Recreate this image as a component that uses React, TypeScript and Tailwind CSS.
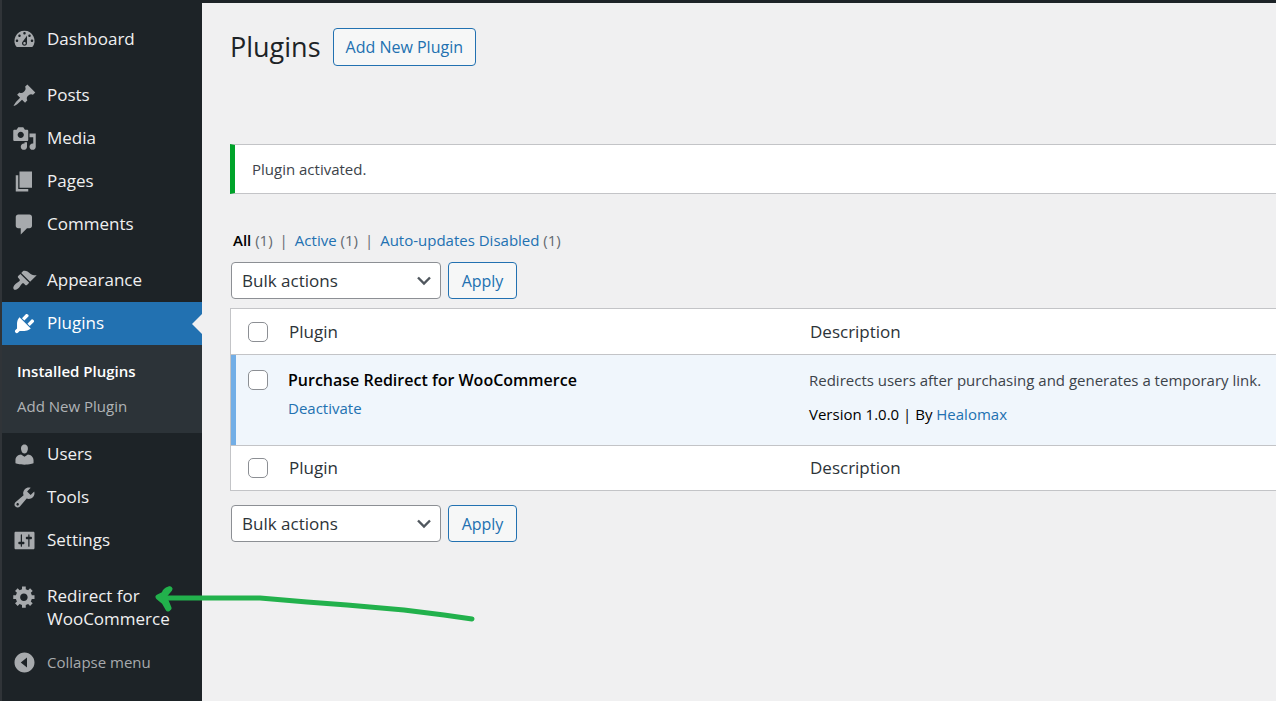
import { useState } from 'react';

type MenuItem = {
  label: string;
  icon: string;
};

const icons = {
  dashboard:
    'M3.76 16h12.48A7.998 7.998 0 0 0 10 3a7.998 7.998 0 0 0-6.24 13zM10 4c.55 0 1 .45 1 1s-.45 1-1 1-1-.45-1-1 .45-1 1-1zM6 6c.55 0 1 .45 1 1s-.45 1-1 1-1-.45-1-1 .45-1 1-1zm8 0c.55 0 1 .45 1 1s-.45 1-1 1-1-.45-1-1 .45-1 1-1zm-5.37 5.55L12 7v6c0 1.1-.9 2-2 2s-2-.9-2-2c0-.57.24-1.08.63-1.45zM4 10c.55 0 1 .45 1 1s-.45 1-1 1-1-.45-1-1 .45-1 1-1zm12 0c.55 0 1 .45 1 1s-.45 1-1 1-1-.45-1-1 .45-1 1-1zm-5 3c0-.55-.45-1-1-1s-1 .45-1 1 .45 1 1 1 1-.45 1-1z',
  posts:
    'M10.44 3.02l1.82-1.82 6.36 6.35-1.83 1.82c-1.05-.68-2.48-.57-3.41.36l-.75.75c-.92.93-1.04 2.35-.35 3.41l-1.83 1.82-2.41-2.41-2.8 2.79c-.42.42-3.38 2.71-3.8 2.29s1.86-3.39 2.28-3.81l2.79-2.79L4.1 9.36l1.83-1.82c1.05.69 2.48.57 3.4-.36l.75-.75c.93-.92 1.05-2.35.36-3.41z',
  media:
    'M13 11V4c0-.55-.45-1-1-1h-1.67L9 1H5L3.67 3H2c-.55 0-1 .45-1 1v7c0 .55.45 1 1 1h10c.55 0 1-.45 1-1zM7 4.5c1.38 0 2.5 1.12 2.5 2.5S8.38 9.5 7 9.5 4.5 8.38 4.5 7 5.62 4.5 7 4.5zM14 6h5v10.5c0 1.38-1.12 2.5-2.5 2.5S14 17.88 14 16.5s1.12-2.5 2.5-2.5c.17 0 .34.02.5.05V9h-3V6zm-4 8.05V13h2v3.5c0 1.38-1.12 2.5-2.5 2.5S7 17.88 7 16.5 8.12 14 9.5 14c.17 0 .34.02.5.05z',
  pages: 'M6 15V2h10v13H6zm-1 1h8v2H3V5h2v11z',
  comments:
    'M5 2h9c1.1 0 2 .9 2 2v7c0 1.1-.9 2-2 2h-2l-5 5v-5H5c-1.1 0-2-.9-2-2V4c0-1.1.9-2 2-2z',
  appearance:
    'M14.48 11.06L7.41 3.99l1.5-1.5c.5-.56 2.3-.47 3.51.32 1.21.8 1.43 1.28 2.91 2.1 1.18.64 2.45 1.26 4.45.85zm-.71.71L6.7 4.7 4.93 6.47c-.39.39-.39 1.02 0 1.41l1.06 1.06c.39.39.39 1.03 0 1.42-.6.6-1.43 1.11-2.21 1.69-.35.26-.7.53-1.01.84C1.43 14.23.4 16.08 1.4 17.07c.99 1 2.84-.03 4.18-1.36.31-.31.58-.66.85-1.02.57-.78 1.08-1.61 1.69-2.21.39-.39 1.02-.39 1.41 0l1.06 1.06c.39.39 1.02.39 1.41 0z',
  plugins:
    'M13.11 4.36L9.87 7.6 8 5.73l3.24-3.24c.35-.34 1.05-.2 1.56.32.52.51.66 1.21.31 1.55zm-8 1.77l.91-1.12 9.01 9.01-1.19.84c-.71.71-2.63 1.16-3.82 1.16H6.14L4.9 17.26c-.59.59-1.54.59-2.12 0-.59-.58-.59-1.53 0-2.12l1.24-1.24v-3.88c0-1.13.4-3.19 1.09-3.89zm7.26 3.97l3.24-3.24c.34-.35 1.04-.21 1.55.31.52.51.66 1.21.31 1.55l-3.24 3.25z',
  users:
    'M10 9.25c-2.27 0-2.73-3.44-2.73-3.44C7 4.02 7.82 2 9.97 2c2.16 0 2.98 2.02 2.71 3.81 0 0-.41 3.44-2.68 3.44zm0 2.57L12.72 10c2.39 0 4.52 2.33 4.52 4.53v2.49s-3.65 1.13-7.24 1.13c-3.65 0-7.24-1.13-7.24-1.13v-2.49c0-2.25 1.94-4.48 4.47-4.48z',
  tools:
    'M16.68 9.77c-1.34 1.34-3.3 1.67-4.95.99l-5.41 6.52c-.99.99-2.59.99-3.58 0s-.99-2.59 0-3.57l6.52-5.42c-.68-1.65-.35-3.61.99-4.95 1.28-1.28 3.12-1.62 4.72-1.06l-2.89 2.89 2.82 2.82 2.86-2.87c.53 1.58.18 3.39-1.08 4.65zM3.81 16.21c.4.39 1.04.39 1.43 0 .4-.4.4-1.04 0-1.43-.39-.4-1.03-.4-1.43 0-.39.39-.39 1.03 0 1.43z',
  settings:
    'M18 16V4c0-.55-.45-1-1-1H3c-.55 0-1 .45-1 1v12c0 .55.45 1 1 1h14c.55 0 1-.45 1-1zM8 11h1c.55 0 1 .45 1 1s-.45 1-1 1H8v1.5c0 .28-.22.5-.5.5s-.5-.22-.5-.5V13H6c-.55 0-1-.45-1-1s.45-1 1-1h1V5.5c0-.28.22-.5.5-.5s.5.22.5.5V11zm5-2h-1c-.55 0-1-.45-1-1s.45-1 1-1h1V5.5c0-.28.22-.5.5-.5s.5.22.5.5V7h1c.55 0 1 .45 1 1s-.45 1-1 1h-1v5.5c0 .28-.22.5-.5.5s-.5-.22-.5-.5V9z',
  generic:
    'M18 12h-2.18c-.17.7-.44 1.35-.81 1.93l1.54 1.54-2.1 2.1-1.54-1.54c-.58.36-1.23.63-1.91.79V19H8v-2.18c-.68-.16-1.33-.43-1.91-.79l-1.54 1.54-2.12-2.12 1.54-1.54c-.36-.58-.63-1.23-.79-1.91H1V9.03h2.17c.16-.7.44-1.35.8-1.94L2.43 5.55l2.1-2.1 1.54 1.54c.58-.37 1.24-.64 1.93-.81V2h3v2.18c.68.16 1.33.43 1.91.79l1.54-1.54 2.12 2.12-1.54 1.54c.36.59.64 1.24.8 1.94H18V12zm-8.5 1.5c1.66 0 3-1.34 3-3s-1.34-3-3-3-3 1.34-3 3 1.34 3 3 3z',
  collapse: 'M10 2c4.42 0 8 3.58 8 8s-3.58 8-8 8-8-3.58-8-8 3.58-8 8-8zm2 12V6l-5 4z',
};

const contentItems: MenuItem[] = [
  { label: 'Posts', icon: icons.posts },
  { label: 'Media', icon: icons.media },
  { label: 'Pages', icon: icons.pages },
  { label: 'Comments', icon: icons.comments },
];

const adminItems: MenuItem[] = [
  { label: 'Users', icon: icons.users },
  { label: 'Tools', icon: icons.tools },
  { label: 'Settings', icon: icons.settings },
];

const Icon = ({ path }: { path: string }) => (
  <svg viewBox="0 0 20 20" className="h-[25px] w-[25px] shrink-0" fill="currentColor" fillRule="evenodd" aria-hidden="true">
    <path d={path} />
  </svg>
);

const MenuLink = ({ item }: { item: MenuItem }) => (
  <a href="#" className="flex min-h-[43px] gap-[10px] py-[9px] pr-3 pl-[10px] text-[#a7aaad] hover:text-[#72aee6]">
    <Icon path={item.icon} />
    <span className="leading-[23px] text-[#f0f0f1]">{item.label}</span>
  </a>
);

const Sidebar = () => (
  <nav className="w-[202px] shrink-0 border-l-2 border-[#303438] bg-[#1d2327] pt-[18px] text-[17px]">
    <MenuLink item={{ label: 'Dashboard', icon: icons.dashboard }} />
    <div className="h-[13px]" />
    {contentItems.map((item) => (
      <MenuLink key={item.label} item={item} />
    ))}
    <div className="h-[13px]" />
    <MenuLink item={{ label: 'Appearance', icon: icons.appearance }} />

    <a href="#" aria-current="page" className="relative flex h-[43px] gap-[10px] bg-[#2271b1] py-[9px] pl-[10px] text-white">
      <Icon path={icons.plugins} />
      <span className="leading-[23px]">Plugins</span>
      {/* Notch pointing at the current page */}
      <span className="absolute top-1/2 right-0 -translate-y-1/2 border-y-10 border-r-10 border-y-transparent border-r-[#f0f0f1]" />
    </a>
    <div className="flex flex-col bg-[#2c3338] px-[15px] py-[9px] text-[15px] leading-[35px]">
      <a href="#" className="font-semibold text-white">Installed Plugins</a>
      <a href="#" className="text-[#b0b3b6] hover:text-[#72aee6]">Add New Plugin</a>
    </div>

    {adminItems.map((item) => (
      <MenuLink key={item.label} item={item} />
    ))}
    <div className="h-[13px]" />
    <MenuLink item={{ label: 'Redirect for WooCommerce', icon: icons.generic }} />
    <button type="button" className="flex h-[47px] w-full items-center gap-[10px] pl-[10px] text-[15px] text-[#a7aaad]">
      <Icon path={icons.collapse} />
      <span>Collapse menu</span>
    </button>
  </nav>
);

const BulkActions = ({ label }: { label: string }) => (
  <div className="flex gap-[7px] pl-px">
    <div className="relative">
      <select
        aria-label={label}
        className="h-[37px] w-[210px] appearance-none rounded-[4px] border border-[#8c8f94] bg-white pr-8 pl-[10px] text-[17px] text-[#2c3338]"
      >
        <option>Bulk actions</option>
        <option>Activate</option>
        <option>Deactivate</option>
        <option>Delete</option>
      </select>
      <svg viewBox="0 0 20 20" className="pointer-events-none absolute top-2 right-[7px] h-5 w-5" fill="none" stroke="#50575e" strokeWidth="2.4" aria-hidden="true">
        <path d="M4 7.5l6 6 6-6" />
      </svg>
    </div>
    <button type="button" className="h-[37px] w-[69px] rounded-[4px] border border-[#2271b1] bg-[#f6f7f7] text-[16px] text-[#2271b1]">
      Apply
    </button>
  </div>
);

const Checkbox = ({ label, checked, onChange }: { label: string; checked: boolean; onChange: () => void }) => (
  <input
    type="checkbox"
    aria-label={label}
    checked={checked}
    onChange={onChange}
    className="block h-5 w-5 appearance-none rounded-[5px] border border-[#8c8f94] bg-white checked:bg-[#2271b1]"
  />
);

export default function App() {
  const [selected, setSelected] = useState(false);
  const toggle = () => setSelected(!selected);

  const headings = (label: string, height: string) => (
    <tr className={`${height} text-[17px] text-[#2c3338]`}>
      <td className="w-[57px] pl-[17px]">
        <Checkbox label={label} checked={selected} onChange={toggle} />
      </td>
      <th scope="col" className="w-[521px] pl-px text-left font-normal">Plugin</th>
      <th scope="col" className="pl-px text-left font-normal">Description</th>
    </tr>
  );

  return (
    <div className="relative flex min-h-screen overflow-hidden bg-[#f0f0f1] font-['Open_Sans','Noto_Sans',sans-serif] text-[#3c434a]">
      <Sidebar />

      <main className="min-w-0 flex-1 border-t-[3px] border-[#1d2327] pl-7">
        <div className="flex items-center gap-3 pt-[25px]">
          <h1 className="text-[27px] leading-[36px] text-[#1d2327]">Plugins</h1>
          <a href="#" className="flex h-[38px] items-center rounded-[4px] border border-[#2271b1] bg-[#f6f7f7] px-3 text-[16px] text-[#2271b1]">
            Add New Plugin
          </a>
        </div>

        <div role="status" className="mt-[78px] flex h-[50px] items-center border-y border-l-[5px] border-y-[#c3c4c7] border-l-[#00a32a] bg-white pl-[17px] text-[15px]">
          Plugin activated.
        </div>

        <ul className="mt-[34px] mb-[10px] flex gap-[7px] pl-[3px] text-[15px] leading-6 text-[#646970]">
          <li><a href="#" className="font-semibold text-black">All</a> (1)</li>
          <li aria-hidden="true">|</li>
          <li><a href="#" className="text-[#2271b1]">Active</a> (1)</li>
          <li aria-hidden="true">|</li>
          <li><a href="#" className="text-[#2271b1]">Auto-updates Disabled</a> (1)</li>
        </ul>

        <BulkActions label="Select bulk action" />

        <table className="mt-[9px] mb-[14px] w-full table-fixed border-separate border-spacing-0 border-y border-l border-[#c3c4c7] bg-white">
          <thead>{headings('Select all plugins', 'h-[45px]')}</thead>
          <tbody>
            <tr className="h-[92px] bg-[#f0f6fc] align-top text-[15px]">
              <td className="relative border-y border-[#c3c4c7] pt-[15px] pl-[17px]">
                <span className="absolute inset-y-0 left-0 w-[5px] bg-[#72aee6]" />
                <Checkbox label="Select Purchase Redirect for WooCommerce" checked={selected} onChange={toggle} />
              </td>
              <td className="border-y border-[#c3c4c7] pt-[13px]">
                <strong className="block text-[16px] leading-6 font-semibold text-black">Purchase Redirect for WooCommerce</strong>
                <a href="#" className="mt-1 block leading-6 text-[#2271b1]">Deactivate</a>
              </td>
              <td className="border-y border-[#c3c4c7] pt-[13px]">
                <p className="leading-6">Redirects users after purchasing and generates a temporary link.</p>
                <p className="mt-[10px] leading-6 text-black">
                  Version 1.0.0 | By <a href="#" className="text-[#2271b1]">Healomax</a>
                </p>
              </td>
            </tr>
          </tbody>
          <tfoot>{headings('Select all plugins, bottom', 'h-[44px]')}</tfoot>
        </table>

        <BulkActions label="Select bulk action, bottom" />
      </main>

      {/* Hand-drawn arrow over the last menu entry */}
      <svg
        viewBox="0 0 324 44"
        className="pointer-events-none absolute top-[582px] left-[152px] h-[44px] w-[324px]"
        fill="none"
        stroke="#22b14c"
        strokeWidth="5"
        strokeLinecap="round"
        strokeLinejoin="round"
        aria-hidden="true"
      >
        <path d="M8 16H108L155 20L195 23L252 28L292 33L313 36L320 37" />
        <path d="M17 7Q13 8 12 12L6 15L12 20L16 27" />
        <path d="M18 7L12 14L17 26" />
      </svg>
    </div>
  );
}
